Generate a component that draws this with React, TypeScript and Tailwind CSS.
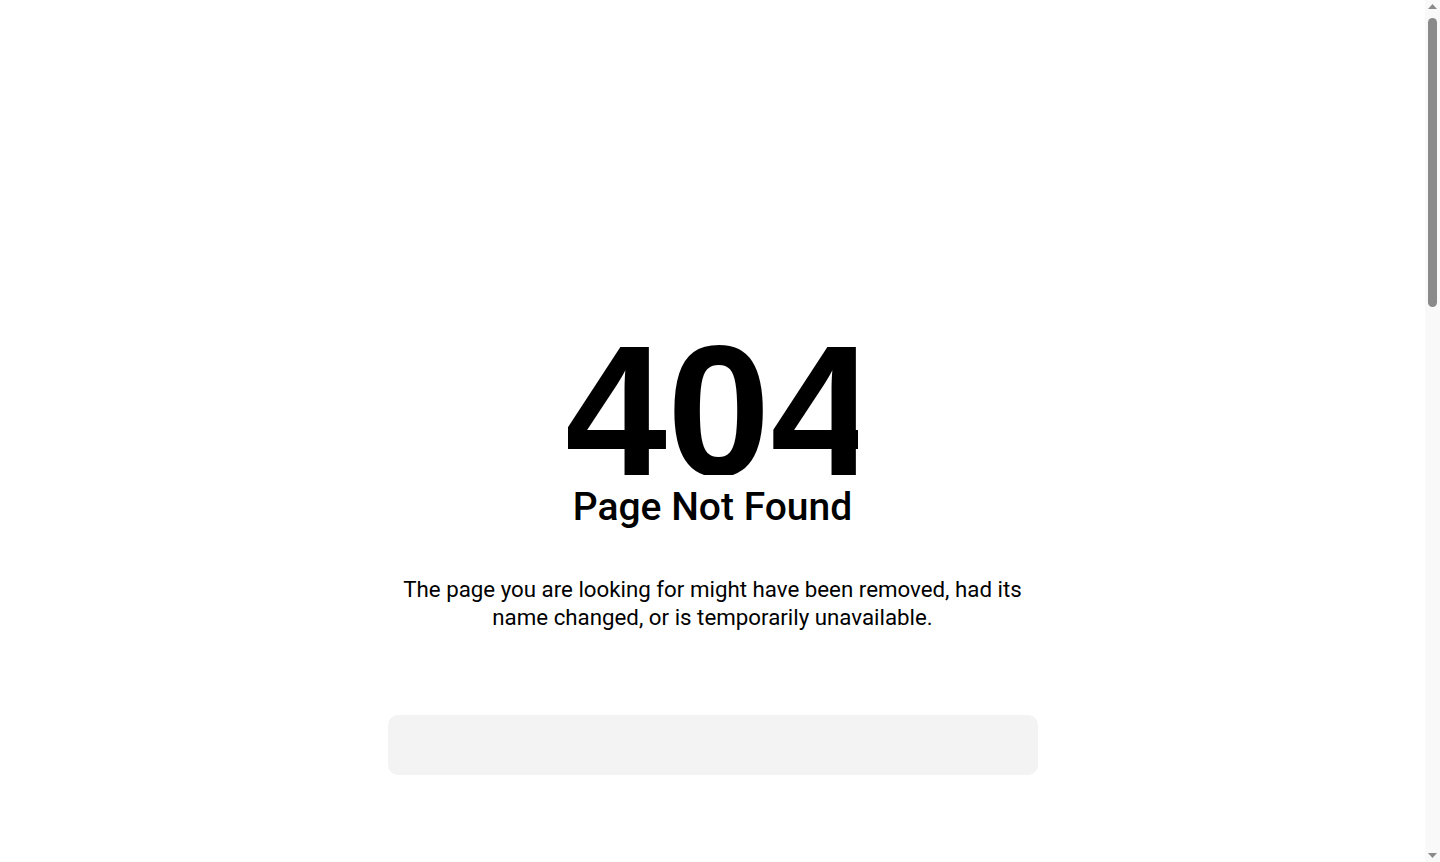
function ScrollRail() {
	return (
		<div className="flex h-screen w-[15px] shrink-0 flex-col items-center bg-[#f9f9f9]">
			<div className="flex h-[15px] w-full items-center justify-center">
				<svg width="9" height="5" viewBox="0 0 9 5" className="mb-[3px]">
					<polygon points="4.5,0 9,5 0,5" fill="#8a8a8a" />
				</svg>
			</div>
			<div className="flex-1 w-full px-[3px] pt-[3px]">
				<div className="h-[289px] w-full rounded-full bg-[#8a8a8a]" />
			</div>
			<div className="flex h-[15px] w-full items-center justify-center">
				<svg width="9" height="5" viewBox="0 0 9 5" className="mt-[2px]">
					<polygon points="0,0 9,0 4.5,5" fill="#8a8a8a" />
				</svg>
			</div>
		</div>
	);
}

export default function App() {
	return (
		<div className="flex h-screen bg-white text-black [font-family:Roboto,'Liberation_Sans',sans-serif]">
			<div className="flex-1 overflow-y-scroll [scrollbar-width:none]">
				<main className="flex flex-col items-center pt-[345px] pb-[1713px]">
					{/* big code sits in a fixed box that crops its edges */}
					<div className="h-[130px] w-[290px] overflow-hidden">
						<h1 className="-ml-[4px] whitespace-nowrap text-left text-[186px] font-bold leading-[132px] [font-family:'Liberation_Sans',Arial,sans-serif]">
							404
						</h1>
					</div>
					<h2 className="mt-[13px] text-[39px] font-medium leading-[38px]">Page Not Found</h2>
					<p className="mt-[50px] w-[650px] text-center text-[22.3px] leading-[27.5px]">
						The page you are looking for might have been removed, had its name changed, or is temporarily unavailable.
					</p>
					{/* search / links slot, left empty */}
					<div className="mt-[84px] h-[60px] w-[650px] rounded-[10px] bg-[#f3f3f3]" />
				</main>
			</div>
			<ScrollRail />
		</div>
	);
}
